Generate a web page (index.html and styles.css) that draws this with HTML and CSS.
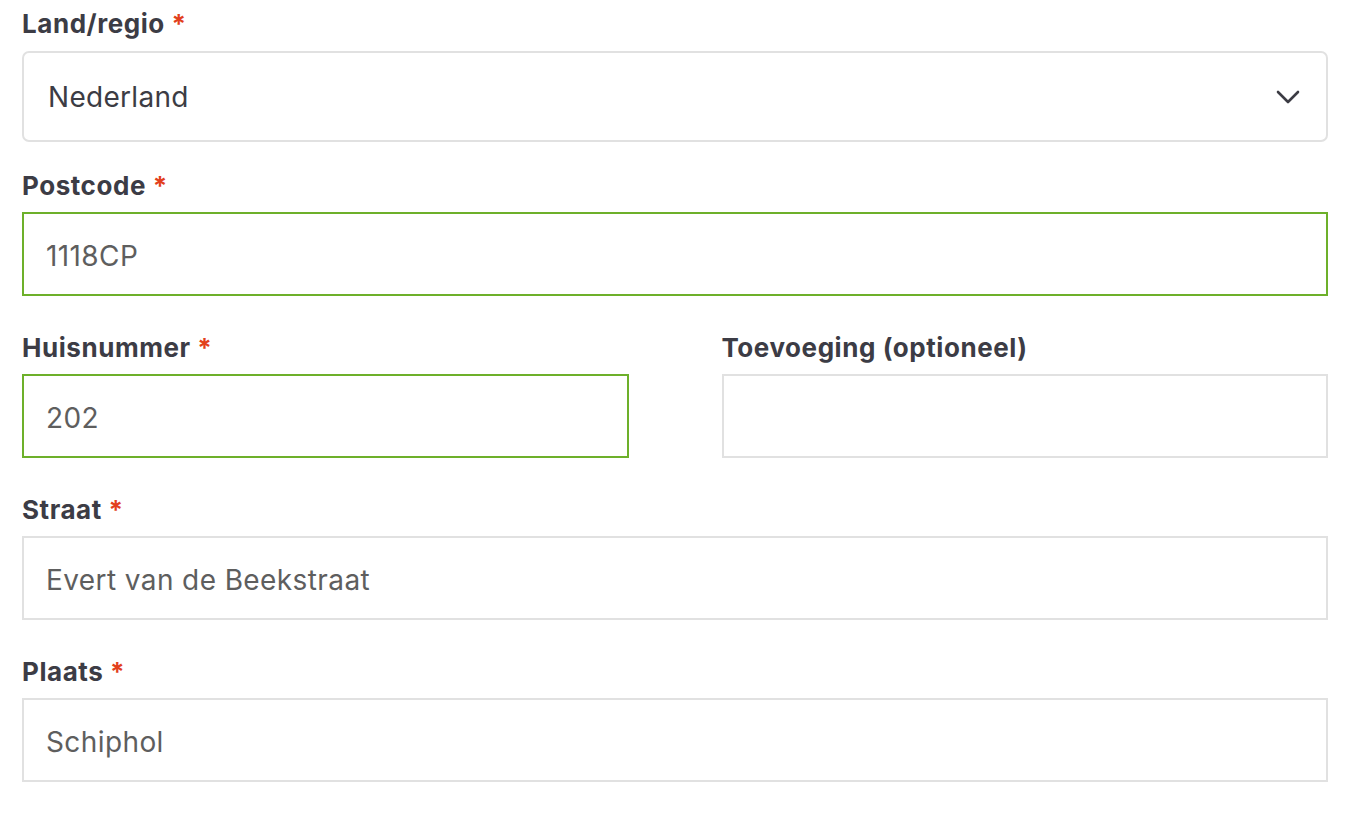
FILE: index.html
```html
<!DOCTYPE html>
<html lang="nl">
<head>
<meta charset="utf-8">
<title>Adres</title>
<link rel="stylesheet" href="styles.css">
</head>
<body>
<form class="form">
  <div class="field field-select">
    <label class="label">Land/regio <span class="req">*</span></label>
    <div class="select">
      <span class="select-value">Nederland</span>
      <svg class="chevron" width="24" height="16" viewBox="0 0 24 16" aria-hidden="true"><path d="M2 3 L12 13 L22 3" fill="none" stroke="#3c3c44" stroke-width="2.6" stroke-linecap="round" stroke-linejoin="round"/></svg>
    </div>
  </div>
  <div class="field">
    <label class="label">Postcode <span class="req">*</span></label>
    <div class="input valid">1118CP</div>
  </div>
  <div class="row">
    <div class="field">
      <label class="label">Huisnummer <span class="req">*</span></label>
      <div class="input valid">202</div>
    </div>
    <div class="field">
      <label class="label">Toevoeging (optioneel)</label>
      <div class="input"></div>
    </div>
  </div>
  <div class="field">
    <label class="label">Straat <span class="req">*</span></label>
    <div class="input">Evert van de Beekstraat</div>
  </div>
  <div class="field">
    <label class="label">Plaats <span class="req">*</span></label>
    <div class="input">Schiphol</div>
  </div>
</form>
</body>
</html>
```
FILE: styles.css
```css
html, body {
  margin: 0;
  padding: 0;
  background: #ffffff;
}
body {
  font-family: Inter, "Noto Sans", "Liberation Sans", sans-serif;
  color: #3c3c44;
}
.form {
  width: 1306px;
  padding: 6px 0 0 22px;
}
.field {
  margin-bottom: 34px;
}
.field-select {
  margin-bottom: 26px;
}
.label {
  display: block;
  font-size: 26px;
  line-height: 36px;
  font-weight: 700;
  letter-spacing: 0.55px;
  color: #3c3c45;
  margin-bottom: 8px;
}
.field-select .label {
  margin-bottom: 9px;
}
.req {
  color: #e2401c;
}
.select {
  height: 91px;
  box-sizing: border-box;
  border: 2px solid #e1e1e1;
  border-radius: 7px;
  display: flex;
  align-items: center;
  justify-content: space-between;
  padding: 0 26px 0 24px;
}
.select-value {
  font-size: 28px;
  letter-spacing: 0.3px;
  color: #3c3c44;
}
.chevron {
  display: block;
}
.input {
  height: 84px;
  box-sizing: border-box;
  border: 2px solid #e1e1e1;
  display: flex;
  align-items: center;
  padding: 4px 22px 0;
  font-size: 28px;
  letter-spacing: 0.4px;
  color: #5e5e5e;
}
.input.valid {
  border-color: #6db02a;
}
.row {
  display: grid;
  grid-template-columns: 1fr 1fr;
  column-gap: 93px;
}
```
